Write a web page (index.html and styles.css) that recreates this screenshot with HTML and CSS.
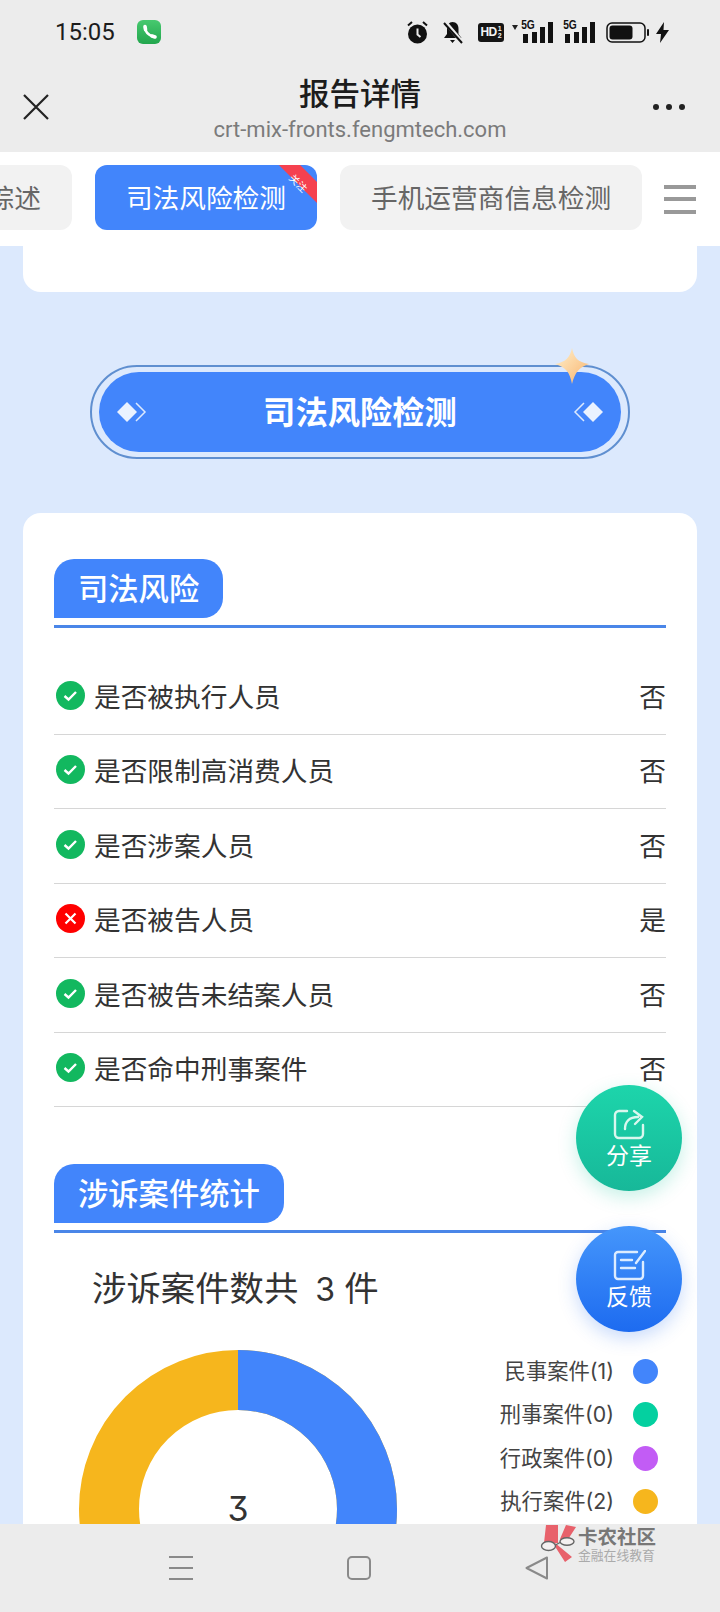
FILE: index.html
```html
<!DOCTYPE html>
<html>
    <head>
        <meta charset="utf-8"/>
        <title>报告详情</title>
        <link rel="stylesheet" href="styles.css">
    </head>
    <body>
        <div id="phone">
            <div class="status-bar">
                <span class="time">15:05</span>
                <svg class="phone-icon" width="24" height="24" viewBox="0 0 24 24">
                    <defs>
                        <linearGradient id="phone-fill" x1="0" y1="0" x2="0" y2="1">
                            <stop offset="0" stop-color="#47c96f"/>
                            <stop offset="1" stop-color="#22a64d"/>
                        </linearGradient>
                    </defs>
                    <rect width="24" height="24" rx="6" fill="url(#phone-fill)"/>
                    <path d="M8 7.500c.3 4 3.500 7.500 8 9" fill="none" stroke="#fff" stroke-width="2.600"/>
                    <path d="M8 6.500l.5 3M15 16l3 1" fill="none" stroke="#fff" stroke-width="3.600" stroke-linecap="round"/>
                </svg>
                <div class="status-icons">
                    <svg class="ic-alarm" width="21" height="23" viewBox="0 0 21 23">
                        <circle cx="10.500" cy="13" r="9.500" fill="#111"/>
                        <path d="M10.500 7.500v6l3 2.500" fill="none" stroke="#ececec" stroke-width="2"/>
                        <path d="M1 4.500L5 1M20 4.500L16 1" stroke="#111" stroke-width="2"/>
                    </svg>
                    <svg class="ic-bell" width="22" height="23" viewBox="0 0 22 23">
                        <path d="M10.500 1c4 0 6 3 6 7v5l3 4H2l3-4V8c0-4 2-7 5.500-7zM8 19h5l-2.500 3z" fill="#111"/>
                        <path d="M3 1l17 20" stroke="#ececec" stroke-width="4"/>
                        <path d="M2 2l18 20" stroke="#111" stroke-width="2"/>
                    </svg>
                    <div class="hd-badge"><span>HD</span><span class="hd-nums">1<br>2</span></div>
                    <div class="signal sig-one">
                        <i class="sig-arrow"></i>
                        <span class="net">5G</span>
                        <svg width="31" height="21" viewBox="0 0 31 21">
                            <path d="M0 12h5v9H0zM9 10h5v11H9zM17 5h5v16h-5zM25 0h5v21h-5z" fill="#111"/>
                        </svg>
                    </div>
                    <div class="signal">
                        <span class="net">5G</span>
                        <svg width="31" height="21" viewBox="0 0 31 21">
                            <path d="M0 12h5v9H0zM9 10h5v11H9zM17 5h5v16h-5zM25 0h5v21h-5z" fill="#111"/>
                        </svg>
                    </div>
                    <svg class="ic-battery" width="44" height="21" viewBox="0 0 44 21">
                        <rect x="1" y="1" width="38" height="19" rx="5" fill="none" stroke="#111" stroke-width="1.500"/>
                        <rect x="3.500" y="3.500" width="23" height="14" rx="3" fill="#111"/>
                        <rect x="41" y="7" width="2" height="7" rx="1" fill="#111"/>
                    </svg>
                    <svg class="ic-bolt" width="13" height="21" viewBox="0 0 13 21">
                        <path d="M8 0L0 12h5l-1 9 9-13H7.500z" fill="#111"/>
                    </svg>
                </div>
            </div>

            <div class="title-bar">
                <svg class="close-icon" width="26" height="26" viewBox="0 0 26 26">
                    <path d="M1 1l24 24M25 1L1 25" fill="none" stroke="#222" stroke-width="2.200"/>
                </svg>
                <div class="title-text">
                    <div class="title-main">报告详情</div>
                    <div class="title-url">crt-mix-fronts.fengmtech.com</div>
                </div>
                <div class="more-dots"><i></i><i></i><i></i></div>
            </div>

            <div class="tab-bar">
                <div class="tab tab-cut">综述</div>
                <div class="tab tab-active">司法风险检测<span class="ribbon"><em>关注</em></span></div>
                <div class="tab">手机运营商信息检测</div>
                <div class="tab-menu"><i></i><i></i><i></i></div>
            </div>

            <div class="scroll-area">
                <div class="card-stub"></div>

                <div class="banner">
                    <div class="banner-inner">
                        <svg width="30" height="22" viewBox="0 0 30 22">
                            <path d="M19 2l9 9-9 9" fill="none" stroke="#dce9fd" stroke-width="1.500"/>
                            <path d="M10 1l10 10-10 10L0 11z" fill="#eaf2ff"/>
                        </svg>
                        <span class="banner-title">司法风险检测</span>
                        <svg width="30" height="22" viewBox="0 0 30 22">
                            <path d="M11 2l-9 9 9 9" fill="none" stroke="#dce9fd" stroke-width="1.500"/>
                            <path d="M20 1l10 10-10 10-10-10z" fill="#eaf2ff"/>
                        </svg>
                    </div>
                    <svg class="banner-star" width="36" height="36" viewBox="0 0 36 38">
                        <defs>
                            <linearGradient id="star-fill" x1="0" y1="0" x2="1" y2="1">
                                <stop offset="0" stop-color="#fff2cf"/>
                                <stop offset="1" stop-color="#f8b26c"/>
                            </linearGradient>
                        </defs>
                        <path d="M18 0c2 10 6 15 18 17-10 3-15 9-18 21-2-12-7-18-18-21C11 15 16 10 18 0z" fill="url(#star-fill)"/>
                    </svg>
                </div>

                <div class="card">
                    <div class="section-head"><span class="section-tag">司法风险</span></div>
                    <ul class="risk-list">
                        <li class="risk-row">
                            <svg class="risk-icon" viewBox="0 0 29 29"><circle cx="14.500" cy="14.500" r="14.500" fill="#12b85f"/><path d="M8.500 15l4 3.500 7.500-7.500" fill="none" stroke="#fff" stroke-width="2.400"/></svg>
                            <span class="risk-name">是否被执行人员</span><span class="risk-val">否</span>
                        </li>
                        <li class="risk-row">
                            <svg class="risk-icon" viewBox="0 0 29 29"><circle cx="14.500" cy="14.500" r="14.500" fill="#12b85f"/><path d="M8.500 15l4 3.500 7.500-7.500" fill="none" stroke="#fff" stroke-width="2.400"/></svg>
                            <span class="risk-name">是否限制高消费人员</span><span class="risk-val">否</span>
                        </li>
                        <li class="risk-row">
                            <svg class="risk-icon" viewBox="0 0 29 29"><circle cx="14.500" cy="14.500" r="14.500" fill="#12b85f"/><path d="M8.500 15l4 3.500 7.500-7.500" fill="none" stroke="#fff" stroke-width="2.400"/></svg>
                            <span class="risk-name">是否涉案人员</span><span class="risk-val">否</span>
                        </li>
                        <li class="risk-row">
                            <svg class="risk-icon" viewBox="0 0 29 29"><circle cx="14.500" cy="14.500" r="14.500" fill="#f00"/><path d="M9.500 9.500l10 10M19.500 9.500l-10 10" fill="none" stroke="#fff" stroke-width="2.200"/></svg>
                            <span class="risk-name">是否被告人员</span><span class="risk-val">是</span>
                        </li>
                        <li class="risk-row">
                            <svg class="risk-icon" viewBox="0 0 29 29"><circle cx="14.500" cy="14.500" r="14.500" fill="#12b85f"/><path d="M8.500 15l4 3.500 7.500-7.500" fill="none" stroke="#fff" stroke-width="2.400"/></svg>
                            <span class="risk-name">是否被告未结案人员</span><span class="risk-val">否</span>
                        </li>
                        <li class="risk-row">
                            <svg class="risk-icon" viewBox="0 0 29 29"><circle cx="14.500" cy="14.500" r="14.500" fill="#12b85f"/><path d="M8.500 15l4 3.500 7.500-7.500" fill="none" stroke="#fff" stroke-width="2.400"/></svg>
                            <span class="risk-name">是否命中刑事案件</span><span class="risk-val">否</span>
                        </li>
                    </ul>

                    <div class="section-head section-second"><span class="section-tag">涉诉案件统计</span></div>
                    <div class="case-total">涉诉案件数共<span class="case-num">3</span>件</div>
                    <div class="chart-row">
                        <svg class="donut" width="318" height="318" viewBox="0 0 318 318">
                            <circle cx="159" cy="159" r="129" fill="none" stroke="#f6b61d" stroke-width="60"/>
                            <circle cx="159" cy="159" r="129" fill="none" stroke="#4285fb" stroke-width="60" pathLength="3" stroke-dasharray="1 2" transform="rotate(-90 159 159)"/>
                            <text class="donut-num" x="159" y="171" text-anchor="middle">3</text>
                        </svg>
                        <ul class="legend">
                            <li class="legend-row">民事案件(1)<i class="dot dot-blue"></i></li>
                            <li class="legend-row">刑事案件(0)<i class="dot dot-green"></i></li>
                            <li class="legend-row">行政案件(0)<i class="dot dot-purple"></i></li>
                            <li class="legend-row">执行案件(2)<i class="dot dot-yellow"></i></li>
                        </ul>
                    </div>
                </div>
            </div>

            <div class="nav-bar">
                <svg width="24" height="24" viewBox="0 0 24 24">
                    <path d="M0 1h24M0 12h24M0 23h24" stroke="#8a8a8a" stroke-width="2"/>
                </svg>
                <svg width="24" height="24" viewBox="0 0 24 24">
                    <rect x="1" y="1" width="22" height="22" rx="4" fill="none" stroke="#8a8a8a" stroke-width="2"/>
                </svg>
                <svg width="24" height="24" viewBox="0 0 24 24">
                    <path d="M22 1.500L1.500 12 22 22.500z" fill="none" stroke="#8a8a8a" stroke-width="2" stroke-linejoin="round"/>
                </svg>
            </div>

            <a class="fab fab-share">
                <svg width="33" height="31" viewBox="0 0 33 31">
                    <path d="M14 2H6a4 4 0 0 0-4 4v19a4 4 0 0 0 4 4h20a4 4 0 0 0 4-4v-9" fill="none" stroke="#d9f7ee" stroke-width="2.400" stroke-linecap="round"/>
                    <path d="M12 20c0-7 4-12 13-12M21 2l8 6-7 7" fill="none" stroke="#d9f7ee" stroke-width="2.400" stroke-linecap="round"/>
                </svg>
                <span>分享</span>
            </a>
            <a class="fab fab-feedback">
                <svg width="33" height="31" viewBox="0 0 33 31">
                    <path d="M24 2H5a3 3 0 0 0-3 3v21a3 3 0 0 0 3 3h22a3 3 0 0 0 3-3V12" fill="none" stroke="#dcecff" stroke-width="2.400" stroke-linecap="round"/>
                    <path d="M8 10h11M8 18h14M23 13L32 1" fill="none" stroke="#dcecff" stroke-width="2.400" stroke-linecap="round"/>
                </svg>
                <span>反馈</span>
            </a>

            <div class="watermark">
                <svg width="38" height="38" viewBox="0 0 38 38">
                    <path d="M6 1h12v18H4zM20 15l6-14 10 2-11 17zM15 19l17 14-7 5-9-14z" fill="#e8616b"/>
                    <ellipse cx="8.500" cy="22" rx="7" ry="4.500" fill="#f4f0f0" stroke="#666" stroke-width="1.400"/>
                    <ellipse cx="27" cy="17.500" rx="7" ry="3.800" fill="#f4f0f0" stroke="#666" stroke-width="1.400"/>
                    <path d="M15.500 21l4.500-2.500" stroke="#666" stroke-width="1.400"/>
                </svg>
                <div class="wm-text">
                    <div class="wm-big">卡农社区</div>
                    <div class="wm-small">金融在线教育</div>
                </div>
            </div>
        </div>
    </body>
</html>
```

FILE: styles.css
```css
* {
    margin: 0;
    padding: 0;
    box-sizing: border-box;
}

html, body {
    width: 720px;
    height: 1612px;
    overflow: hidden;
}

body {
    font-family: "Noto Sans CJK SC", "Noto Sans", sans-serif;
    color: #333;
}

ul {
    list-style: none;
}

#phone {
    position: relative;
    display: flex;
    flex-direction: column;
    width: 720px;
    height: 1612px;
    background: #dce9fd;
    overflow: hidden;
}

/* status bar */
.status-bar {
    display: flex;
    align-items: center;
    flex: none;
    height: 64px;
    padding-left: 55px;
    background: #ececec;
}

.time {
    font-family: Roboto, sans-serif;
    font-size: 24px;
    color: #1c1c1c;
}

.phone-icon {
    margin-left: 22px;
}

.status-icons {
    display: flex;
    align-items: center;
    margin-left: 246px;
    height: 24px;
}

.ic-bell {
    margin-left: 14px;
}

.hd-badge {
    display: flex;
    align-items: center;
    justify-content: center;
    gap: 1px;
    width: 26px;
    height: 19px;
    margin-left: 14px;
    border-radius: 3px;
    background: #151515;
    color: #f4f4f4;
    font-family: "Liberation Sans", sans-serif;
    font-size: 12px;
    font-weight: 700;
    letter-spacing: -0.5px;
}

.hd-nums {
    font-size: 7px;
    line-height: 7px;
}

.signal {
    position: relative;
    width: 31px;
    height: 21px;
    margin-left: 11px;
}

.sig-one {
    margin-left: 19px;
}

.sig-arrow {
    position: absolute;
    left: -11px;
    top: 3px;
    border-top: 5px solid #222;
    border-left: 3.500px solid transparent;
    border-right: 3.500px solid transparent;
}

.net {
    position: absolute;
    left: -3px;
    top: -3px;
    font-family: "Liberation Sans", sans-serif;
    font-size: 12px;
    font-weight: 700;
    color: #111;
    background: #ececec;
    line-height: 12px;
    transform: scaleX(0.85);
    z-index: 1;
}

.ic-battery {
    margin-left: 10px;
}

.ic-bolt {
    margin-left: 6px;
}

/* title bar */
.title-bar {
    display: flex;
    align-items: center;
    flex: none;
    position: relative;
    height: 88px;
    background: #ececec;
}

.close-icon {
    position: absolute;
    left: 23px;
    top: 30px;
}

.title-text {
    width: 100%;
    text-align: center;
}

.title-main {
    margin-bottom: 4px;
    font-size: 30.500px;
    font-weight: 500;
    line-height: 40px;
    color: #1c1c1c;
}

.title-url {
    font-family: Roboto, sans-serif;
    font-size: 22px;
    line-height: 28px;
    color: #7b7b7b;
}

.more-dots {
    position: absolute;
    left: 653px;
    top: 40px;
    display: flex;
    gap: 7px;
}

.more-dots i {
    width: 6px;
    height: 6px;
    border-radius: 50%;
    background: #222;
}

/* tabs */
.tab-bar {
    display: flex;
    align-items: center;
    flex: none;
    gap: 23px;
    height: 94px;
    padding-bottom: 4px;
    background: #fff;
    overflow: hidden;
    position: relative;
    z-index: 2;
}

.tab {
    position: relative;
    flex: none;
    height: 65px;
    padding: 0 31px;
    border-radius: 12px;
    background: #f2f2f2;
    color: #666;
    font-size: 26.700px;
    line-height: 63px;
    overflow: hidden;
}

.tab-cut {
    margin-left: -43.500px;
}

.tab-active {
    background: #4285fb;
    color: #fff;
}

.ribbon {
    position: absolute;
    right: -17px;
    top: 6px;
    width: 62px;
    height: 15px;
    background: #f5414f;
    transform: rotate(45deg);
    color: #fff;
    text-align: center;
    line-height: 15px;
}

.ribbon em {
    display: inline-block;
    font-style: normal;
    font-size: 12px;
    transform: scale(0.85);
}

.tab-menu {
    display: flex;
    flex-direction: column;
    gap: 8.500px;
    margin: 4px 0 0 -1px;
}

.tab-menu i {
    display: block;
    width: 32px;
    height: 4px;
    background: #999;
}

/* scrolling content */
.scroll-area {
    flex: 1;
    min-height: 0;
    overflow: hidden;
}

.card-stub {
    height: 46px;
    margin: 0 23px;
    border-radius: 0 0 18px 18px;
    background: #fff;
}

.banner {
    position: relative;
    width: 540px;
    height: 94px;
    margin: 73px auto 54px;
    padding: 5px 7px;
    border: 2px solid #5f8fd0;
    border-radius: 47px;
}

.banner-inner {
    display: flex;
    align-items: center;
    justify-content: space-between;
    height: 100%;
    padding: 0 18px;
    border-radius: 40px;
    background: #4285fb;
}

.banner-title {
    padding-bottom: 5px;
    font-size: 32.300px;
    font-weight: 700;
    color: #fff;
}

.banner-star {
    position: absolute;
    right: 38px;
    top: -19px;
}

.card {
    height: 1200px;
    margin: 0 23px;
    padding: 46px 31px 0;
    border-radius: 18px;
    background: #fff;
}

.section-head {
    height: 69px;
    border-bottom: 3px solid #4a86e8;
}

.section-tag {
    display: inline-block;
    height: 59px;
    padding: 0 24px;
    border-radius: 20px 20px 20px 0;
    background: #4285fb;
    color: #fff;
    font-size: 30.300px;
    font-weight: 500;
    line-height: 57px;
}

.section-second {
    margin-top: 57px;
}

.risk-list {
    margin-top: 32px;
}

.risk-row {
    display: flex;
    align-items: center;
    height: 74.500px;
    padding-bottom: 3px;
    border-bottom: 1px solid #d6d6d6;
    font-size: 26.700px;
    color: #333;
}

.risk-icon {
    flex: none;
    width: 29px;
    height: 29px;
    margin: 0 9px 0 2px;
}

.risk-val {
    margin-left: auto;
}

.case-total {
    margin: 29px 0 0 38px;
    font-size: 34.400px;
    line-height: 48px;
    color: #333;
}

.case-num {
    margin: 0 9px 0 17px;
    font-family: Inter, sans-serif;
    font-size: 32px;
}

.chart-row {
    display: flex;
    justify-content: space-between;
    margin: 36px 8px 0 25px;
}

.donut {
    flex: none;
}

.donut-num {
    font-family: Inter, Roboto, sans-serif;
    font-feature-settings: "cv09";
    font-size: 34px;
    fill: #333;
}

.legend {
    margin-top: 9px;
}

.legend-row {
    display: flex;
    align-items: center;
    justify-content: flex-end;
    gap: 19px;
    height: 25px;
    margin-bottom: 18.400px;
    padding-bottom: 4px;
    font-family: Inter, "Noto Sans CJK SC", sans-serif;
    font-size: 21.300px;
    color: #444;
}

.dot {
    width: 25px;
    height: 25px;
    margin-bottom: -4px;
    border-radius: 50%;
}

.dot-blue { background: #4285fb; }
.dot-green { background: #04d0a0; }
.dot-purple { background: #c25cf5; }
.dot-yellow { background: #f6b61d; }

/* bottom navigation */
.nav-bar {
    display: flex;
    align-items: flex-start;
    flex: none;
    gap: 154px;
    height: 88px;
    padding: 32px 0 0 169px;
    background: #ececec;
    position: relative;
    z-index: 2;
}

/* floating buttons */
.fab {
    position: absolute;
    left: 576px;
    display: flex;
    flex-direction: column;
    align-items: center;
    width: 106px;
    height: 106px;
    padding-top: 24px;
    border-radius: 50%;
    color: #fff;
    font-size: 23px;
    line-height: 28px;
    z-index: 3;
}

.fab-share {
    top: 1085px;
    background: linear-gradient(#1dd5ab, #17b899);
    box-shadow: 0 6px 18px rgba(30, 200, 160, 0.25);
}

.fab-feedback {
    top: 1226px;
    background: linear-gradient(#4596fb, #1d6bf0);
    box-shadow: 0 6px 18px rgba(40, 110, 240, 0.25);
}

/* site watermark */
.watermark {
    position: absolute;
    left: 540px;
    top: 1524px;
    display: flex;
    gap: 0;
    z-index: 4;
}

.wm-text {
    color: #777;
    white-space: nowrap;
}

.wm-big {
    font-size: 19.500px;
    font-weight: 700;
    line-height: 24px;
}

.wm-small {
    font-size: 12.800px;
    line-height: 13px;
    color: #aaa;
}
```
